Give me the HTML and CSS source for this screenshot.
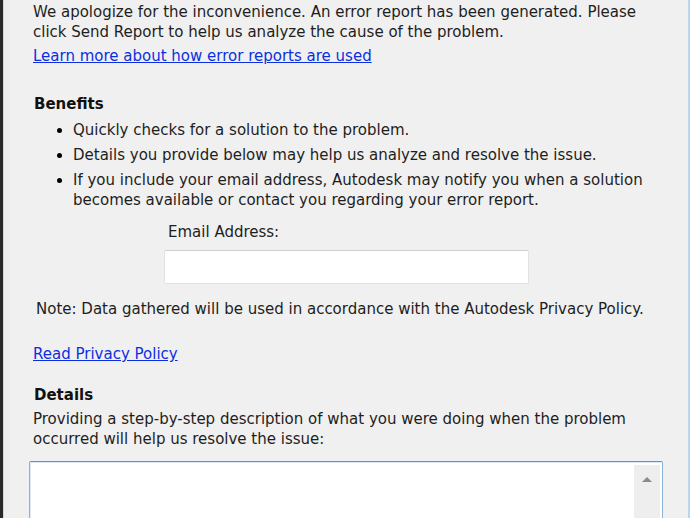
FILE: index.html
```html
<!DOCTYPE html>
<html>
<head>
    <meta charset="UTF-8">
    <title>Error Report</title>
    <link rel="stylesheet" href="styles.css">
</head>
<body>
    <div class="frame">
        <div class="content">
            <p class="intro">We apologize for the inconvenience. An error report has been generated. Please click Send Report to help us analyze the cause of the problem.</p>
            <a class="link learn" href="#">Learn more about how error reports are used</a>

            <h2 class="heading benefits">Benefits</h2>
            <ul class="benefit-list">
                <li>Quickly checks for a solution to the problem.</li>
                <li>Details you provide below may help us analyze and resolve the issue.</li>
                <li>If you include your email address, Autodesk may notify you when a solution becomes available or contact you regarding your error report.</li>
            </ul>

            <div class="email">
                <label for="email">Email Address:</label>
                <input type="text" id="email">
            </div>

            <p class="note">Note: Data gathered will be used in accordance with the Autodesk Privacy Policy.</p>
            <a class="link privacy" href="#">Read Privacy Policy</a>

            <h2 class="heading details">Details</h2>
            <p class="details-text">Providing a step-by-step description of what you were doing when the problem occurred will help us resolve the issue:</p>

            <div class="textbox">
                <div class="textbox-area"></div>
                <div class="scrollbar">
                    <svg width="12" height="8" viewBox="0 0 12 8"><path d="M1 7 L6 2 L11 7 Z" fill="#8a8a8a"/></svg>
                </div>
            </div>
        </div>
    </div>
</body>
</html>
```

FILE: styles.css
```css
html, body {
    margin: 0;
    height: 518px;
    overflow: hidden;
}

body {
    font-family: "DejaVu Sans", Verdana, sans-serif;
    font-size: 15px;
    color: #1e1e1e;
    background-color: #f0f0f0;
}

.frame {
    height: 518px;
    border-left: 3px solid #2a2a2a;
    border-right: 2px solid #bcd4ec;
    box-sizing: border-box;
    box-shadow: inset 1px 0 0 #c4d8ee;
}

.content {
    padding: 2px 0 0 30px;
}

p {
    margin: 0;
    line-height: 20px;
}

.intro {
    width: 625px;
}

.link {
    display: block;
    width: max-content;
    color: #0b2fe0;
    line-height: 20px;
}

.learn {
    margin-top: 4px;
}

.heading {
    margin: 0;
    font-size: 15px;
    font-weight: bold;
    line-height: 20px;
    color: #111;
    padding-left: 1px;
}

.benefits {
    margin-top: 28px;
}

.benefit-list {
    margin: 6px 0 0 0;
    padding-left: 40px;
    width: 585px;
}

.benefit-list li {
    line-height: 20px;
    margin-bottom: 5px;
}

.benefit-list li::marker {
    font-size: 15px;
    color: #000;
}

.email {
    margin-top: 12px;
    padding-left: 131px;
}

.email label {
    display: block;
    line-height: 20px;
    padding-left: 4px;
}

.email input {
    display: block;
    margin-top: 8px;
    width: 365px;
    height: 34px;
    box-sizing: border-box;
    border: 1px solid #e2e2e2;
    border-top-color: #d0d0d0;
    border-radius: 2px;
    background: #fff;
}

.note {
    margin-top: 15px;
    padding-left: 3px;
}

.privacy {
    margin-top: 25px;
}

.details {
    margin-top: 21px;
}

.details-text {
    margin-top: 4px;
}

.textbox {
    margin: 12px 0 0 -4px;
    width: 632px;
    height: 80px;
    display: flex;
    border: 1px solid #8db2d8;
    border-top-color: #5f93c7;
    border-radius: 2px;
    background: #fff;
    box-shadow: inset 1px 1px 0 #dbe8f5;
}

.textbox-area {
    flex: 1;
}

.scrollbar {
    width: 26px;
    margin: 3px 2px 0 0;
    background: #eeeeee;
    display: flex;
    justify-content: center;
    padding-top: 10px;
}

.scrollbar svg {
    display: block;
}
```
